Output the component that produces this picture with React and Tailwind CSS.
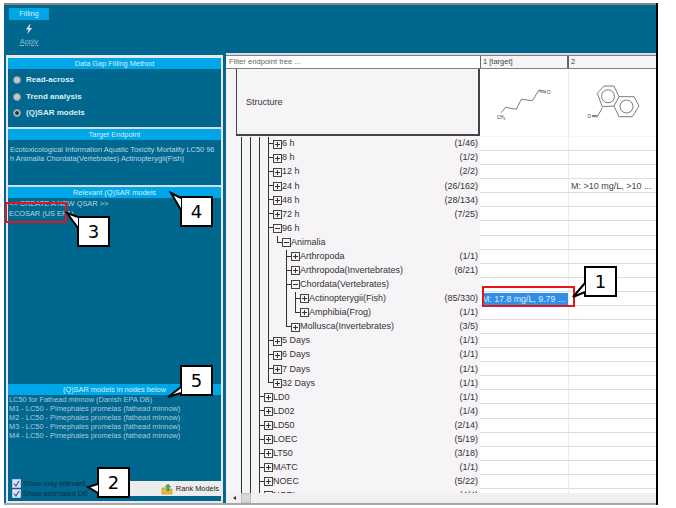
import React from "react";

const rows = [
  { g: "lllt", icon: "plus", label: "6 h", count: "(1/46)" },
  { g: "lllt", icon: "plus", label: "8 h", count: "(1/2)" },
  { g: "lllt", icon: "plus", label: "12 h", count: "(2/2)" },
  { g: "lllt", icon: "plus", label: "24 h", count: "(26/162)", c2: "M: >10 mg/L, >10 ..." },
  { g: "lllt", icon: "plus", label: "48 h", count: "(28/134)" },
  { g: "lllt", icon: "plus", label: "72 h", count: "(7/25)" },
  { g: "lllt", icon: "minus", label: "96 h", count: "" },
  { g: "lllle", icon: "minus", label: "Animalia", count: "" },
  { g: "llllbt", icon: "plus", label: "Arthropoda", count: "(1/1)" },
  { g: "llllbt", icon: "plus", label: "Arthropoda(Invertebrates)", count: "(8/21)" },
  { g: "llllbt", icon: "minus", label: "Chordata(Vertebrates)", count: "" },
  { g: "llllblt", icon: "plus", label: "Actinopterygii(Fish)", count: "(85/330)", c1: "M: 17.8 mg/L, 9.79 ..." },
  { g: "llllble", icon: "plus", label: "Amphibia(Frog)", count: "(1/1)" },
  { g: "llllbe", icon: "plus", label: "Mollusca(Invertebrates)", count: "(3/5)" },
  { g: "lllt", icon: "plus", label: "5 Days", count: "(1/1)" },
  { g: "lllt", icon: "plus", label: "6 Days", count: "(1/1)" },
  { g: "lllt", icon: "plus", label: "7 Days", count: "(1/1)" },
  { g: "llle", icon: "plus", label: "32 Days", count: "(1/1)" },
  { g: "llt", icon: "plus", label: "LD0", count: "(1/1)" },
  { g: "llt", icon: "plus", label: "LD02", count: "(1/4)" },
  { g: "llt", icon: "plus", label: "LD50", count: "(2/14)" },
  { g: "llt", icon: "plus", label: "LOEC", count: "(5/19)" },
  { g: "llt", icon: "plus", label: "LT50", count: "(3/18)" },
  { g: "llt", icon: "plus", label: "MATC", count: "(1/1)" },
  { g: "llt", icon: "plus", label: "NOEC", count: "(5/22)" },
  { g: "llt", icon: "plus", label: "NOEL", count: "(4/4)" },
];

const models = [
  "LC50 for Fathead minnow (Danish EPA DB)",
  "M1 - LC50 - Pimephales promelas (fathead minnow)",
  "M2 - LC50 - Pimephales promelas (fathead minnow)",
  "M3 - LC50 - Pimephales promelas (fathead minnow)",
  "M4 - LC50 - Pimephales promelas (fathead minnow)",
];

// Tree guide cells: l = line, b = blank, t = tee, e = elbow
function Guide({ type }) {
  if (type === "l") return <div className="w-[9px] h-full shrink-0 border-l border-[#333]" />;
  if (type === "b") return <div className="w-[9px] h-full shrink-0" />;
  return (
    <div className="w-[5px] h-full shrink-0">
      <div className="border-l border-b border-[#333] h-[7px]" />
      {type === "t" && <div className="border-l border-[#333] h-[8px]" />}
    </div>
  );
}

function ExpandIcon({ kind }) {
  return (
    <svg width="9" height="9" viewBox="0 0 9 9" className="shrink-0">
      <rect x="0.5" y="0.5" width="8" height="8" fill="none" stroke="#444" />
      <path d={kind === "plus" ? "M2 4.5H7M4.5 2V7" : "M2 4.5H7"} stroke="#333" />
    </svg>
  );
}

function TreeRow({ row }) {
  return (
    <div className="flex h-[14.08px] shrink-0">
      <div className="w-[254px] shrink-0 bg-[#f6f4f7] flex items-center pl-[15px] pr-[2px] text-[#333]">
        {row.g.split("").map((t, i) => (
          <Guide key={i} type={t} />
        ))}
        <ExpandIcon kind={row.icon} />
        <span className="whitespace-nowrap">{row.label}</span>
        <span className="ml-auto">{row.count}</span>
      </div>
      <div className="w-[89px] shrink-0 bg-white border-b border-[#dcdcdc] border-r border-r-[#ebebeb] overflow-hidden">
        {row.c1 && (
          <div className="mt-[1px] ml-[2px] h-[12px] leading-[12px] text-[8.8px] bg-[#2f8fe8] text-[#dcecf8] whitespace-nowrap overflow-hidden">{row.c1}</div>
        )}
      </div>
      <div className="flex-1 bg-white border-b border-[#dcdcdc] pl-[2px] leading-[14px] text-[#444] whitespace-nowrap overflow-hidden">
        {row.c2}
      </div>
    </div>
  );
}

function Header({ children }) {
  return <div className="bg-[#00a7e8] text-center text-[#d5effa] leading-[11px] h-[11px] shrink-0">{children}</div>;
}

function Radio({ label, checked }) {
  return (
    <div className="flex items-center h-[16.5px] pl-[5px] gap-[5px] text-[8px] font-bold text-[#dfeef5]">
      <div className="w-[8px] h-[8px] rounded-full bg-[#c4c8cc] border border-[#8d979e] flex items-center justify-center">
        {checked && <div className="w-[4px] h-[4px] rounded-full bg-[#234]" />}
      </div>
      {label}
    </div>
  );
}

function Check({ label }) {
  return (
    <div className="flex items-center gap-[2px] h-[10px] text-[#0f2a3c]">
      <svg width="9" height="9" viewBox="0 0 9 9" className="shrink-0">
        <rect width="9" height="9" fill="#dfe4f4" stroke="#8fa0c8" />
        <path d="M2 4.5L4 7L7 2" fill="none" stroke="#3350a0" strokeWidth="1.2" />
      </svg>
      <span className="whitespace-nowrap">{label}</span>
    </div>
  );
}

// Numbered note with a pointer; tail path is in the box's outer coordinates
function Callout({ n, box, tail }) {
  return (
    <div className={`absolute bg-white border-2 border-black flex items-center justify-center text-[18px] text-black font-['DejaVu_Sans',sans-serif] ${box}`}>
      {n}
      <svg width="33" height="31" viewBox="0 0 33 31" className="absolute left-[-2px] top-[-2px] overflow-visible">
        <path d={tail} fill="white" stroke="black" strokeWidth="2" />
      </svg>
    </div>
  );
}

export default function App() {
  return (
    <div className="relative w-[676px] h-[508px] overflow-hidden bg-white pt-[3px] pl-[4px] text-[7.4px] font-['Liberation_Sans',sans-serif]">
      <div className="w-[654px] border-r-2 border-black">
        <div className="h-[2px] bg-[#858585]" />

        {/* Ribbon */}
        <div className="h-[48px] bg-[#00688f] pt-[3px] pl-[5px]">
          <div className="w-[40px] h-[12px] bg-[#00a7e8] text-center leading-[12px] text-[#d5effa]">Filling</div>
          <div className="w-[40px] flex flex-col items-center mt-[4px] text-[#8fbcd0]">
            <svg width="8" height="10" viewBox="0 0 8 10">
              <path d="M5 0L1 5.5H3.5L2.5 10L7 4H4.2L5.5 0Z" fill="#dfe8ec" />
            </svg>
            <span className="mt-[2px] underline">Apply</span>
          </div>
        </div>

        <div className="flex h-[450px] bg-[#00688f]">
          {/* Left panel */}
          <div className="ml-[2px] mt-[2px] w-[217px] h-[448px] shrink-0 border-x-2 border-t-[3px] border-[#e8e8ec] flex flex-col">
            <Header>Data Gap Filling Method</Header>
            <div className="h-[58px] shrink-0 pt-[3px]">
              <Radio label="Read-across" />
              <Radio label="Trend analysis" />
              <Radio label="(Q)SAR models" checked />
            </div>
            <div className="h-[2px] bg-[#d8dde2] shrink-0" />
            <Header>Target Endpoint</Header>
            <div className="h-[45px] shrink-0 pt-[5px] px-[2px] leading-[9px] text-[#b9d5e2]">
              Ecotoxicological Information Aquatic Toxicity Mortality LC50 96 h Animalia Chordata(Vertebrates) Actinopterygii(Fish)
            </div>
            <div className="h-[2px] bg-[#d8dde2] shrink-0" />
            <Header>Relevant (Q)SAR models</Header>
            <div className="h-[186px] shrink-0 pt-[1px] px-[1px] leading-[9.5px] text-[#b9d5e2]">
              <div>&lt;&lt; CREATE A NEW QSAR &gt;&gt;</div>
              <div>ECOSAR (US EPA)</div>
            </div>
            <Header>(Q)SAR models in nodes below</Header>
            <div className="flex-1 min-h-0 relative px-[1px] leading-[9px] text-[#a9cbdb] border-b-2 border-[#e8e8ec]">
              {models.map((m) => (
                <div key={m}>{m}</div>
              ))}
              <div className="absolute left-[4px] right-0 bottom-0 flex items-start justify-between pb-[3px]">
                <div className="flex flex-col">
                  <Check label="Show only relevant" />
                  <Check label="Show estimated DB" />
                </div>
                <div className="w-[109px] h-[15px] mt-[3px] bg-[#ececec] flex items-center justify-end gap-[3px] pr-[2px] text-[#222]">
                  <svg width="12" height="12" viewBox="0 0 12 12">
                    <path d="M1 5H4L5 6H11V11H1Z" fill="#e8b93c" stroke="#b58a20" strokeWidth="0.6" />
                    <path d="M6 8V4H4L7 1L10 4H8V8Z" fill="#4fb04a" stroke="#2e7d2b" strokeWidth="0.5" />
                  </svg>
                  Rank Models
                </div>
              </div>
            </div>
          </div>

          {/* Right panel */}
          <div className="ml-[3px] w-[431px] flex flex-col bg-white text-[9px] overflow-hidden">
            <div className="h-[2px] bg-[#dcdcdc] shrink-0" />
            <div className="flex h-[14px] shrink-0 border-y border-[#7f7f7f] bg-[#f6f4f7] leading-[12px]">
              <div className="w-[254px] shrink-0 bg-white pl-[3px] text-[7.6px] text-[#666]">Filter endpoint tree ...</div>
              <div className="w-[89px] shrink-0 pl-[2px] border-l border-r-2 border-[#666] text-[7.5px] text-[#444]">1 [target]</div>
              <div className="flex-1 pl-[2px] text-[7.5px] text-[#444]">2</div>
            </div>

            {/* Structure row */}
            <div className="flex h-[67px] shrink-0">
              <div className="w-[254px] shrink-0 bg-[#f6f4f7] pl-[10px]">
                <div className="h-full border-r-2 border-l border-b-2 border-[#444] flex items-center pl-[9px] pt-[2px] text-[#333]">Structure</div>
              </div>
              <div className="w-[89px] shrink-0 border-r border-[#ebebeb]">
                <svg width="88" height="67" viewBox="0 0 88 67">
                  <path d="M21.3 43.7L25.7 38.3L36.3 40.3L41.3 30.3L52.3 31.7L59 21L66.3 22.3M59.3 22.5L66 23.8" fill="none" stroke="#444" strokeWidth="0.7" />
                  <text x="17" y="50" fontSize="4.5" fill="#333">CH₃</text>
                  <text x="67" y="24.5" fontSize="4.5" fill="#333">O</text>
                </svg>
              </div>
              <div className="flex-1">
                <svg width="88" height="67" viewBox="0 0 88 67">
                  <g fill="none" stroke="#444" strokeWidth="0.7">
                    <path d="M28.3 24.3L35 17L45 17L50 27.7L45 37L33.3 37.7Z" />
                    <path d="M50 27.7L65 27.7L70 37L63.3 47.7L50 47.7L45 37" />
                    <circle cx="39" cy="27.3" r="6.5" />
                    <circle cx="57.5" cy="37.5" r="6.5" />
                    <path d="M33.3 39L28.3 47.7L23 47.7M28 46.5L23 46.5" />
                  </g>
                  <text x="18.5" y="49" fontSize="4.5" fill="#333">O</text>
                </svg>
              </div>
            </div>

            {/* Tree and cells */}
            <div className="flex-1 min-h-0 overflow-hidden flex flex-col pt-[1px] bg-[#f6f4f7]">
              {rows.map((r) => (
                <TreeRow key={r.label + r.count} row={r} />
              ))}
            </div>

            {/* Scroll bar */}
            <div className="h-[10px] shrink-0 bg-[#f2eff3] flex items-center pl-[7px]">
              <span className="w-0 h-0 border-y-[2px] border-y-transparent border-r-[3px] border-r-[#333]" />
              <div className="ml-[5px] w-[10px] h-[10px] bg-[#d8d8dc] border border-[#c0c0c4]" />
            </div>
          </div>
        </div>
        <div className="h-[2px] bg-[#a8a4a8]" />
      </div>

      {/* Annotations over the screenshot */}
      <div className="absolute left-[482px] top-[286px] w-[93px] h-[21px] border-2 border-[#e8141c]" />
      <div className="absolute left-[5px] top-[202px] w-[62px] h-[21px] border-2 border-[#e8141c]" />
      <Callout n="1" box="left-[584px] top-[266px] w-[33px] h-[31px]" tail="M1 17L-11 31L1 26" />
      <Callout n="2" box="left-[97px] top-[467px] w-[33px] h-[31px]" tail="M1 17L-9 20L1 26" />
      <Callout n="3" box="left-[77px] top-[216px] w-[33px] h-[31px]" tail="M1 1L-10 -3L1 12" />
      <Callout n="4" box="left-[180px] top-[196px] w-[33px] h-[31px]" tail="M1 2L-9 -3L1 14" />
      <Callout n="5" box="left-[180px] top-[365px] w-[33px] h-[31px]" tail="M1 22L-12 32L1 28" />
    </div>
  );
}
